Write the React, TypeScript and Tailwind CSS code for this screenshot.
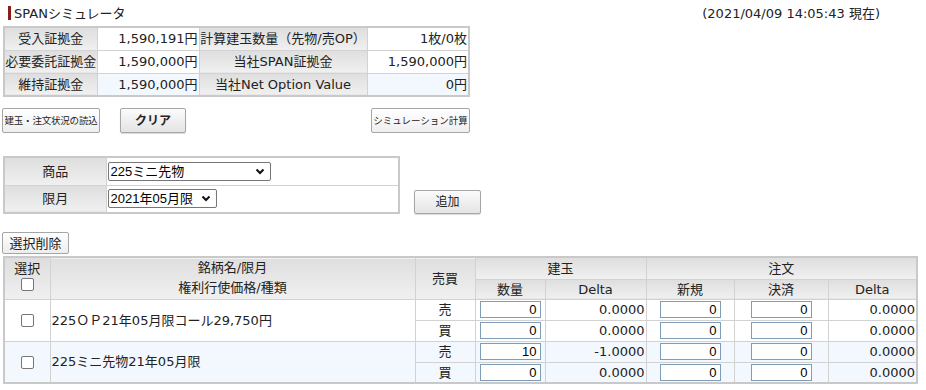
import React from "react";

const FONT = "font-['DejaVu_Sans','Noto_Sans_CJK_JP',sans-serif]";
const ARIAL = "font-['Liberation_Sans','Noto_Sans_CJK_JP',sans-serif]";
const GRAD = "bg-linear-to-b from-[#dedede] to-[#f0f0f0]";
const CB = "border border-[#d2d2d2]";
const BLUE = "bg-[#f2f8fd]";

function Chevron() {
  return (
    <svg width="10" height="7" viewBox="0 0 10 7" className="shrink-0">
      <polyline points="1.5,1.5 5,5 8.5,1.5" fill="none" stroke="#111" strokeWidth="2" />
    </svg>
  );
}

function FakeSelect({ value, w }: { value: string; w: string }) {
  return (
    <div
      className={`${w} h-[19px] border border-[#767676] rounded-[2px] bg-white flex items-center justify-between pl-[2px] pr-[5px] text-[13px] leading-none text-black ${ARIAL}`}
    >
      <span>{value}</span>
      <Chevron />
    </div>
  );
}

function Check() {
  return <span className="inline-block w-[13px] h-[13px] border border-[#767676] rounded-[2px] bg-white align-middle" />;
}

function NumInput({ v }: { v: string }) {
  return (
    <div
      className={`mx-auto w-[61px] h-[17px] border border-[#7f9db9] bg-white text-right pr-[3px] text-[13px] leading-[15px] text-black ${ARIAL}`}
    >
      {v}
    </div>
  );
}

export default function App() {
  const summary = [
    ["受入証拠金", "1,590,191円", "計算建玉数量（先物/売OP）", "1枚/0枚", false],
    ["必要委託証拠金", "1,590,000円", "当社SPAN証拠金", "1,590,000円", false],
    ["維持証拠金", "1,590,000円", "当社Net Option Value", "0円", true],
  ] as const;

  const groups = [
    {
      name: "225ＯＰ21年05月限コール29,750円",
      blue: false,
      rows: [
        ["売", "0", "0.0000", "0", "0", "0.0000"],
        ["買", "0", "0.0000", "0", "0", "0.0000"],
      ],
    },
    {
      name: "225ミニ先物21年05月限",
      blue: true,
      rows: [
        ["売", "10", "-1.0000", "0", "0", "0.0000"],
        ["買", "0", "0.0000", "0", "0", "0.0000"],
      ],
    },
  ];

  return (
    <div className={`w-[926px] h-[390px] bg-white text-[#222] ${FONT} text-[13px] overflow-hidden`}>
      {/* Title */}
      <div className="h-[26px] flex items-center justify-between pl-[8px] pr-[46px]">
        <div className="flex items-center gap-[3px]">
          <span className="w-[3px] h-[14px] bg-[#8b1c1c]" />
          <span className="text-[13px] leading-none">SPANシミュレータ</span>
        </div>
        <span className="text-[13px] leading-none">(2021/04/09 14:05:43 現在)</span>
      </div>

      {/* Summary */}
      <div className="pl-[3px]">
        <table className="border-collapse border-2 border-[#c9c9c9] table-fixed w-[467px]">
          <colgroup>
            <col className="w-[93px]" />
            <col className="w-[102px]" />
            <col className="w-[168px]" />
            <col />
          </colgroup>
          <tbody>
            {summary.map((r, i) => (
              <tr key={i} className="h-[23px]">
                <td className={`${CB} ${GRAD} text-center leading-none whitespace-nowrap p-0`}>{r[0]}</td>
                <td className={`${CB} ${r[4] ? BLUE : "bg-white"} text-right pr-[1px] leading-none whitespace-nowrap p-0`}>
                  {r[1]}
                </td>
                <td className={`${CB} ${GRAD} text-center leading-none whitespace-nowrap p-0`}>{r[2]}</td>
                <td className={`${CB} ${r[4] ? BLUE : "bg-white"} text-right pr-[1px] leading-none whitespace-nowrap p-0`}>
                  {r[3]}
                </td>
              </tr>
            ))}
          </tbody>
        </table>
      </div>

      {/* Buttons */}
      <div className="mt-[11px] pl-[2px] flex items-center w-[470px]">
        <button className="h-[25px] w-[98px] border border-[#a6a6a6] rounded-[2px] bg-linear-to-b from-[#ffffff] to-[#efefef] text-[9.5px] leading-none tracking-[-0.2px] whitespace-nowrap px-0">
          建玉・注文状況の読込
        </button>
        <button className="ml-[20px] h-[25px] w-[66px] border border-[#a6a6a6] rounded-[2px] bg-linear-to-b from-[#fbfbfb] to-[#e4e4e4] shadow-[0_1px_1px_rgba(0,0,0,0.15)] text-[12px] font-bold leading-none">
          クリア
        </button>
        <div className="flex-1" />
        <button className="h-[25px] w-[99px] border border-[#a6a6a6] rounded-[2px] bg-linear-to-b from-[#ffffff] to-[#efefef] text-[9.5px] leading-none whitespace-nowrap px-0">
          シミュレーション計算
        </button>
      </div>

      {/* Product selection */}
      <div className="mt-[23px] pl-[3px] flex items-end">
        <table className="border-collapse border-2 border-[#c9c9c9] table-fixed w-[397px]">
          <colgroup>
            <col className="w-[102px]" />
            <col />
          </colgroup>
          <tbody>
            <tr className="h-[28px]">
              <td className={`${CB} ${GRAD} text-center leading-none p-0`}>商品</td>
              <td className={`${CB} bg-white pl-[1px] p-0`}>
                <FakeSelect value="225ミニ先物" w="w-[163px]" />
              </td>
            </tr>
            <tr className="h-[28px]">
              <td className={`${CB} ${GRAD} text-center leading-none p-0`}>限月</td>
              <td className={`${CB} bg-white pl-[1px] p-0`}>
                <FakeSelect value="2021年05月限" w="w-[109px]" />
              </td>
            </tr>
          </tbody>
        </table>
        <button className="ml-[14px] h-[24px] w-[67px] border border-[#a6a6a6] rounded-[2px] bg-linear-to-b from-[#fbfbfb] to-[#e4e4e4] shadow-[0_1px_1px_rgba(0,0,0,0.15)] text-[12px] leading-none">
          追加
        </button>
      </div>

      {/* Delete button */}
      <div className="mt-[18px] pl-[2px] flex">
        <button className="h-[22px] w-[67px] border border-[#a6a6a6] rounded-[2px] bg-linear-to-b from-[#ffffff] to-[#ededed] text-[13px] leading-none">
          選択削除
        </button>
      </div>

      {/* Main table */}
      <div className="mt-[2px] pl-[3px]">
        <table className="border-collapse border-2 border-[#c9c9c9] table-fixed w-[915px]">
          <colgroup>
            <col className="w-[46px]" />
            <col className="w-[365px]" />
            <col className="w-[60px]" />
            <col className="w-[70px]" />
            <col className="w-[101px]" />
            <col className="w-[88px]" />
            <col className="w-[94px]" />
            <col />
          </colgroup>
          <thead>
            <tr className="h-[22px]">
              <th rowSpan={2} className={`${CB} ${GRAD} font-normal p-0 align-top`}>
                <div className="flex flex-col items-center pt-[4px] gap-[3px] leading-none">
                  <span>選択</span>
                  <Check />
                </div>
              </th>
              <th rowSpan={2} className={`${CB} ${GRAD} font-normal p-0 leading-[20px]`}>
                銘柄名/限月
                <br />
                権利行使価格/種類
              </th>
              <th rowSpan={2} className={`${CB} ${GRAD} font-normal p-0 leading-none`}>
                売買
              </th>
              <th colSpan={2} className={`${CB} ${GRAD} font-normal p-0 leading-none`}>
                建玉
              </th>
              <th colSpan={3} className={`${CB} ${GRAD} font-normal p-0 leading-none`}>
                注文
              </th>
            </tr>
            <tr className="h-[20px]">
              <th className={`${CB} ${GRAD} font-normal p-0 leading-none`}>数量</th>
              <th className={`${CB} ${GRAD} font-normal p-0 leading-none`}>Delta</th>
              <th className={`${CB} ${GRAD} font-normal p-0 leading-none`}>新規</th>
              <th className={`${CB} ${GRAD} font-normal p-0 leading-none`}>決済</th>
              <th className={`${CB} ${GRAD} font-normal p-0 leading-none`}>Delta</th>
            </tr>
          </thead>
          <tbody>
            {groups.map((g, gi) =>
              g.rows.map((r, ri) => {
                const bg = g.blue ? BLUE : "bg-white";
                return (
                  <tr key={`${gi}-${ri}`} className="h-[21px]">
                    {ri === 0 && (
                      <>
                        <td rowSpan={2} className={`${CB} ${bg} text-center p-0`}>
                          <Check />
                        </td>
                        <td rowSpan={2} className={`${CB} ${bg} p-0 pl-[1px] leading-none whitespace-nowrap`}>
                          {g.name}
                        </td>
                      </>
                    )}
                    <td className={`${CB} ${bg} text-center p-0 leading-none`}>{r[0]}</td>
                    <td className={`${CB} ${bg} p-0`}>
                      <NumInput v={r[1]} />
                    </td>
                    <td className={`${CB} ${bg} text-right pr-[1px] p-0 leading-none`}>{r[2]}</td>
                    <td className={`${CB} ${bg} p-0`}>
                      <NumInput v={r[3]} />
                    </td>
                    <td className={`${CB} ${bg} p-0`}>
                      <NumInput v={r[4]} />
                    </td>
                    <td className={`${CB} ${bg} text-right pr-[1px] p-0 leading-none`}>{r[5]}</td>
                  </tr>
                );
              })
            )}
          </tbody>
        </table>
      </div>
    </div>
  );
}
